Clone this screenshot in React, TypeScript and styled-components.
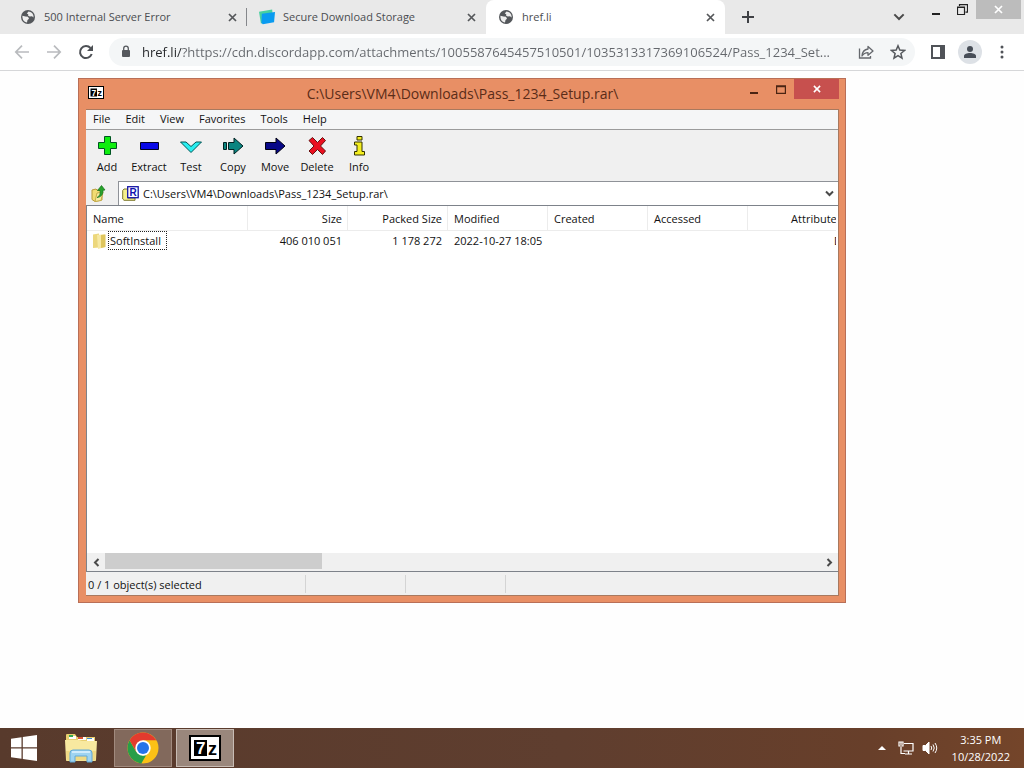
import React from "react";
import styled, { createGlobalStyle } from "styled-components";

const GlobalStyle = createGlobalStyle`
  * { box-sizing: border-box; }
  html, body, #root { height: 100%; }
  body {
    margin: 0;
    font-family: "Open Sans", "Noto Sans", sans-serif;
    font-size: 11px;
    line-height: 16px;
    color: #111;
    background: #fff;
    overflow: hidden;
  }
  button, input, select { font: inherit; color: inherit; }
  button { border: 0; padding: 0; margin: 0; background: none; }
  svg { display: block; flex: none; }
`;

const Screen = styled.div`
  display: flex;
  flex-direction: column;
  min-height: 100vh;
`;

/* ---------- Browser ---------- */

const TabStrip = styled.header`
  display: flex;
  align-items: flex-start;
  height: 34px;
  padding-left: 8px;
  background: #e9e9e9;
`;

const Tab = styled.div<{ $active?: boolean; $divider?: boolean }>`
  position: relative;
  flex: 0 1 239px;
  min-width: 0;
  display: flex;
  align-items: center;
  gap: 8px;
  height: 34px;
  padding: 0 7px 0 12px;
  border-radius: 8px 8px 0 0;
  background: ${(p) => (p.$active ? "#fff" : "transparent")};
  color: #4b4d51;

  &::after {
    content: "";
    display: ${(p) => (p.$divider ? "block" : "none")};
    position: absolute;
    right: 0;
    top: 8px;
    width: 1px;
    height: 18px;
    background: #85878b;
  }
`;

const TabTitle = styled.span`
  flex: 1;
  overflow: hidden;
  white-space: nowrap;
`;

const IconButton = styled.button<{ $size: number; $round?: boolean }>`
  display: flex;
  align-items: center;
  justify-content: center;
  flex: none;
  width: ${(p) => p.$size}px;
  height: ${(p) => p.$size}px;
  border-radius: ${(p) => (p.$round ? "50%" : "0")};
  background: ${(p) => (p.$round ? "#dde1e6" : "transparent")};
`;

const NewTab = styled(IconButton)`
  margin: 5px 0 0 11px;
`;

const TabSearch = styled(IconButton)`
  margin: 5px 11px 0 auto;
`;

const FrameButton = styled.button<{ $close?: boolean }>`
  display: flex;
  align-items: center;
  justify-content: center;
  width: ${(p) => (p.$close ? 45 : 27)}px;
  height: 19px;
  margin-right: ${(p) => (p.$close ? 3 : 0)}px;
  background: ${(p) => (p.$close ? "#bcbcbc" : "transparent")};
`;

const NavBar = styled.nav`
  display: flex;
  align-items: center;
  gap: 8px;
  height: 37px;
  padding: 0 10px;
  background: #fff;
  border-bottom: 1px solid #d6d7d9;
`;

const AddressPill = styled.div`
  flex: 1;
  min-width: 0;
  display: flex;
  align-items: center;
  gap: 12px;
  height: 28px;
  margin: 0 3px;
  padding: 0 7px 0 9px;
  border-radius: 14px;
  background: #f4f6f7;
`;

const AddressLabel = styled.label`
  flex: 1;
  min-width: 0;
  display: flex;
  align-items: center;
  gap: 8px;
`;

const AddressInput = styled.input`
  flex: 1;
  min-width: 0;
  height: 20px;
  padding: 0;
  border: 0;
  outline: 0;
  font-size: 13px;
  color: transparent;
  background: linear-gradient(to right, #25272a 40px, #64676c 40px);
  background-clip: text;
  -webkit-background-clip: text;
`;

const Page = styled.main`
  position: relative;
  flex: 1;
  min-height: 400px;
  background: #fefefe;
`;

/* ---------- Archive window ---------- */

const Window = styled.section`
  position: absolute;
  left: 78px;
  top: 7px;
  bottom: 125px;
  width: 75%;
  display: flex;
  flex-direction: column;
  padding: 0 6px 6px 7px;
  border: 1px solid #b96f57;
  background: #e88f65;
`;

const TitleBar = styled.div`
  display: grid;
  grid-template-columns: 1fr auto 1fr;
  align-items: start;
  height: 30px;
`;

const TitleIcon = styled.div`
  padding: 7px 0 0 2px;
`;

const WindowTitle = styled.h1`
  margin: 0;
  padding-top: 4px;
  font-size: 14px;
  line-height: 22px;
  font-weight: 400;
  color: #5a2c18;
  white-space: nowrap;
`;

const TitleControls = styled.div`
  display: flex;
  justify-content: flex-end;
`;

const TitleButton = styled.button<{ $close?: boolean }>`
  display: flex;
  align-items: center;
  justify-content: center;
  width: ${(p) => (p.$close ? 45 : 27)}px;
  height: 20px;
  background: ${(p) => (p.$close ? "#c7504e" : "transparent")};
`;

const Client = styled.div`
  flex: 1;
  min-height: 0;
  display: flex;
  flex-direction: column;
  border: 1px solid #a8795f;
  border-width: 1px 1px 1px 0;
  background: #f0f0f0;
`;

const MenuBar = styled.div`
  display: flex;
  align-items: flex-start;
  gap: 1px;
  height: 20px;
  border-bottom: 1px solid #9b9b9b;
  background: #f5f6f7;
`;

const MenuItem = styled.button`
  padding: 0 7px;
  line-height: 18px;
`;

const ToolBar = styled.div`
  display: flex;
  height: 51px;
`;

const ToolButton = styled.button`
  display: flex;
  flex-direction: column;
  align-items: center;
  gap: 2px;
  width: 42px;
  padding-top: 5px;
  line-height: 16px;
`;

const PathBar = styled.div`
  display: flex;
  height: 24px;
`;

const UpButton = styled.button`
  display: flex;
  align-items: center;
  justify-content: center;
  width: 26px;
`;

const PathBox = styled.label`
  flex: 1;
  display: flex;
  align-items: center;
  gap: 4px;
  margin-left: 6px;
  padding: 0 4px 0 3px;
  border: 1px solid #8f9298;
  border-width: 1px 0 0 1px;
  background: #fff;
`;

const PathSelect = styled.select`
  flex: 1;
  appearance: none;
  height: 20px;
  padding: 0;
  border: 0;
  background: transparent;
`;

const FileList = styled.div`
  flex: 1;
  min-height: 0;
  display: flex;
  flex-direction: column;
  border: 1px solid #7d828a;
  border-right: 0;
  background: #fff;
`;

const TableClip = styled.div`
  flex: 1;
  min-height: 0;
  margin-right: 2px;
  overflow: hidden;
`;

const Table = styled.table`
  width: 761px;
  table-layout: fixed;
  border-collapse: separate;
  border-spacing: 0;
`;

const Col = styled.col<{ $w: number }>`
  width: ${(p) => p.$w}px;
`;

const HeadCell = styled.th<{ $right?: boolean }>`
  height: 25px;
  padding: 2px 5px 0 6px;
  border: 1px solid #ececec;
  border-width: 0 1px 1px 0;
  font-weight: 400;
  text-align: ${(p) => (p.$right ? "right" : "left")};
  white-space: nowrap;
`;

const Cell = styled.td<{ $right?: boolean }>`
  height: 19px;
  padding: 0 6px;
  text-align: ${(p) => (p.$right ? "right" : "left")};
  white-space: nowrap;
`;

const FileName = styled.div`
  display: flex;
  align-items: center;
  gap: 2px;
`;

const FocusedName = styled.span`
  padding: 0 5px 0 1px;
  border: 1px dotted #222;
  line-height: 17px;
`;

const ScrollBar = styled.div`
  display: flex;
  height: 18px;
  background: #f0f0f0;
`;

const ScrollTrack = styled.div`
  flex: 1;
  display: flex;
  padding-bottom: 2px;
`;

const ScrollThumb = styled.div`
  flex: 0 1 217px;
  background: #cdcdcd;
`;

const ScrollButton = styled.button`
  display: flex;
  align-items: center;
  justify-content: center;
  width: 18px;
`;

const StatusBar = styled.footer`
  display: flex;
  align-items: center;
  height: 23px;
`;

const StatusPane = styled.div<{ $w: number }>`
  width: ${(p) => p.$w}px;
  height: 18px;
  padding: 1px 0 0 2px;
  line-height: 18px;
  border-right: 1px solid #d4d4d4;
`;

/* ---------- Taskbar ---------- */

const TaskBar = styled.footer`
  display: flex;
  align-items: center;
  height: 40px;
  color: #fff;
  background: linear-gradient(to right, #583a2c, #5f3e2f 55%, #683f2a 85%, #74452a);
`;

const StartButton = styled.button`
  display: flex;
  align-items: center;
  justify-content: center;
  width: 48px;
  height: 40px;
  margin-right: 4px;
`;

const TaskButton = styled.button<{ $state?: "open" | "active" }>`
  display: flex;
  align-items: center;
  justify-content: center;
  width: 58px;
  height: 38px;
  margin-right: 4px;
  border: 1px solid
    ${(p) => (p.$state === "active" ? "#c8bcb4" : p.$state === "open" ? "#a18a7e" : "transparent")};
  background: ${(p) => (p.$state === "active" ? "#9a877c" : p.$state === "open" ? "#82695c" : "transparent")};
`;

const Tray = styled.div`
  display: flex;
  align-items: center;
  gap: 8px;
  margin-left: auto;
  padding-right: 14px;
`;

const Clock = styled.time`
  padding-left: 6px;
  line-height: 17px;
  text-align: center;
`;

/* ---------- Icons ---------- */

const Globe = () => (
  <svg width="16" height="16" viewBox="0 0 16 16">
    <circle cx="8" cy="8" r="7" fill="#54575b" />
    <path d="M2.400 6.800 5.500 7.600l2.500.2 1 2-1.500 1.200-.5 2.500C4 13.200 2.200 10.500 2.400 6.800Z" fill="#eee" />
    <path d="M8.500 2.400q2 .1 3.600 1.500 1.800 2 1.500 4.600l-1.600-1.300-2.300.3L8 6.500l.3-1.300L6.800 4.500Z" fill="#eee" />
  </svg>
);

const BlueBoxes = () => (
  <svg width="16" height="16" viewBox="0 0 17 16">
    <path d="M0 2.500 14 0l1 12L2 15Z" fill="#47d0a0" />
    <path d="M3 4.500 17 2.600 16 13.500 4 15.800 2.600 14Z" fill="#0a9bf0" />
  </svg>
);

const Cross = ({ size = 9, color = "#55575a", w = 1.7 }: { size?: number; color?: string; w?: number }) => (
  <svg width={size} height={size} viewBox="0 0 9 9" stroke={color} strokeWidth={w}>
    <path d="M1 1 8 8M8 1 1 8" />
  </svg>
);

const Arrow = ({ back }: { back?: boolean }) => (
  <svg width="16" height="16" viewBox="0 0 16 16" fill="none" stroke="#b9bbbe" strokeWidth="1.700">
    <path d={back ? "M15 8H2M8 1.700 1.800 8 8 14.300" : "M1 8h13M8 1.700 14.200 8 8 14.300"} />
  </svg>
);

const Reload = () => (
  <svg width="16" height="16" viewBox="0 0 16 16" fill="none" stroke="#4d5055" strokeWidth="2">
    <path d="M13.700 10A6 6 0 1 1 12.500 4" />
    <path d="M15 1v6H9Z" fill="#4d5055" stroke="none" />
  </svg>
);

const Lock = () => (
  <svg width="16" height="16" viewBox="0 0 16 16">
    <rect x="4" y="6" width="8" height="7" rx="1" fill="#55585d" />
    <path d="M5.700 7V4.500a2.300 2.300 0 0 1 4.600 0V7" fill="none" stroke="#55585d" strokeWidth="1.300" />
  </svg>
);

const Share = () => (
  <svg width="16" height="16" viewBox="0 0 16 16" fill="none" stroke="#65686d" strokeWidth="1.300">
    <path d="M1.500 4.500V14h11v-2" />
    <path d="M10 2.500 15 7l-5 4.300V8.700C7.200 8.700 5.500 9.700 4 12c.3-4 2.300-6.500 6-7Z" strokeLinejoin="round" />
  </svg>
);

const Star = () => (
  <svg width="16" height="16" viewBox="0 0 16 16" fill="none" stroke="#55585d" strokeWidth="1.500">
    <path d="m8 1.800 1.800 4.300 4.700.4-3.600 3 1.100 4.600L8 11.700l-4 2.400 1.100-4.600-3.600-3 4.700-.4Z" />
  </svg>
);

const SidePanel = () => (
  <svg width="14" height="14" viewBox="0 0 14 14">
    <path d="M1 1h12v12H1Z" fill="none" stroke="#505358" strokeWidth="2" />
    <path d="M9 0h5v14H9Z" fill="#505358" />
  </svg>
);

const Person = () => (
  <svg width="14" height="14" viewBox="0 0 14 14" fill="#474d57">
    <circle cx="7" cy="4" r="3" />
    <path d="M1 13v-2c0-2 3-3 6-3s6 1 6 3v2Z" />
  </svg>
);

const Dots = () => (
  <svg width="4" height="14" viewBox="0 0 4 14" fill="#505358">
    <circle cx="2" cy="2" r="1.500" />
    <circle cx="2" cy="7" r="1.500" />
    <circle cx="2" cy="12" r="1.500" />
  </svg>
);

const chevronPaths = {
  down: "M1 2.500 4.500 6 8 2.500",
  left: "M6.500 1 3 4.500 6.500 8",
  right: "M2.500 1 6 4.500 2.500 8",
};

const Chevron = ({ dir, size = 9, w = 2 }: { dir: keyof typeof chevronPaths; size?: number; w?: number }) => (
  <svg width={size} height={size} viewBox="0 0 9 9" fill="none" stroke="#4a4a4a" strokeWidth={w}>
    <path d={chevronPaths[dir]} />
  </svg>
);

const Minimize = ({ color }: { color: string }) => (
  <svg width="10" height="12" viewBox="0 0 10 12">
    <path d="M1 9h8v2H1Z" fill={color} />
  </svg>
);

const Maximize = () => (
  <svg width="10" height="9" viewBox="0 0 10 9">
    <path d="M.5 1.500h9v7h-9ZM0 1h10" fill="none" stroke="#4a2413" strokeWidth="1.400" />
  </svg>
);

const Restore = () => (
  <svg width="11" height="11" viewBox="0 0 11 11" fill="none" stroke="#222">
    <path d="M.5 3h7v7.500h-7ZM.5 3.500h7M2.500 2V.7h8v7.500H8.500" strokeWidth="1.200" />
  </svg>
);

const SevenZip = ({ size }: { size: number }) => (
  <svg width={size} height={(size * 13) / 16} viewBox="0 0 32 26">
    <rect x="1" y="1" width="30" height="24" fill="#fff" stroke="#000" strokeWidth="2" />
    <rect x="5" y="5" width="13" height="16" fill="#000" />
    <text x="7" y="19" fontFamily="Liberation Sans" fontWeight="700" fontSize="17" fill="#fff">7</text>
    <text x="19" y="20" fontFamily="Liberation Sans" fontWeight="700" fontSize="18" fill="#000">z</text>
  </svg>
);

const toolShapes: Record<string, React.ReactNode> = {
  Add: <path d="M8.500 1.500h6v6h6v6h-6v6h-6v-6h-6v-6h6Z" fill="#10ee10" stroke="#052" />,
  Extract: <path d="M2.500 7.500h18v7h-18Z" fill="#0808e8" stroke="#002" />,
  Test: <path d="M.500 7H6l5 4.500L16 7h5.500L11 17.500Z" fill="#28eef0" stroke="#055" />,
  Copy: <path d="M1.500 7.500h3v7h-3ZM6.500 7.500H12V3l9 8-9 8v-4.500H6.500Z" fill="#0b8580" stroke="#022" />,
  Move: <path d="M1.500 7.500H12V3l9 8-9 8v-4.500H1.500Z" fill="#080888" stroke="#001" />,
  Delete: <path d="m3 5.500 3.500-3 5 5 5-5 3 3L14.500 11l5 5-3 3.500-5-5-5 5L3 16l5-5Z" fill="#ea1020" stroke="#611" />,
  Info: <path d="M9 1.500h5v3.500H9ZM6.500 7H14v9.500h2.500V20h-10v-3.500H9V10H6.500Z" fill="#f4ee20" stroke="#330" />,
};

const UpFolder = () => (
  <svg width="16" height="17" viewBox="0 0 16 17">
    <path d="M1 5 5 4l1 1 5 1v9l-7 1.500-3-2Z" fill="#f1dc73" stroke="#b99b37" />
    <path d="M4 16.500 6 8l6-1-2 8.500Z" fill="#f7eba0" stroke="#c5ac4a" />
    <path d="M6 12.500c3-1.500 3.500-4 3-7H6.500l4-5L14 5l-2 .3c.3 4-2 7-6 7.200Z" fill="#27a32c" stroke="#17711c" strokeWidth=".7" />
  </svg>
);

const ArchiveFolder = () => (
  <svg width="17" height="15" viewBox="0 0 17 15">
    <path d="M.7 4.500 2 3h4v9h7v2.300H2L.7 13Z" fill="#f5f08c" stroke="#7c782c" />
    <rect x="5.700" y=".7" width="10.500" height="11" fill="#fff" stroke="#1515a5" strokeWidth="1.300" />
    <text x="7.500" y="9.500" fontFamily="Liberation Sans" fontWeight="700" fontSize="10" fill="#1111b0">R</text>
  </svg>
);

const Folder = () => (
  <svg width="13" height="16" viewBox="0 0 13 16">
    <path d="M0 1.500 6 .5v14L0 15Z" fill="#ecd77c" />
    <path d="m4 2 8-.8V14l-7 2Z" fill="#f6e8a2" />
    <path d="m8 2 4.500-.6V14L8 15Z" fill="#dfc65e" />
  </svg>
);

const WindowsLogo = () => (
  <svg width="26" height="26" viewBox="0 0 26 26" fill="#fff">
    <path d="M0 3.700 10.500 2.200V12.300H0ZM11.800 2 26 0v12.300H11.800ZM0 13.500h10.500v10.200L0 22.200ZM11.800 13.500H26V26l-14.200-2Z" />
  </svg>
);

const Explorer = () => (
  <svg width="34" height="30" viewBox="0 0 34 30">
    <path d="M2 2q0-1 1-1h8l2 3h18v6H2Z" fill="#e9cf70" />
    <path d="M5 3h7v3H5ZM14 4h8v3h-8ZM23 5h7v3h-7Z" fill="#fff" />
    <path d="M5 2h4v2H5Z" fill="#36a852" />
    <path d="M14 4h5v2h-5Z" fill="#d95534" />
    <path d="M23 5h5v1h-5Z" fill="#3f8fce" />
    <path d="M1 7h14l3 1h15l-1 19q0 1-1 1H3q-1 0-1-1Z" fill="#f8e9a0" />
    <path d="M2 18h30l-.5 9.500H2.500Z" fill="#f0da84" />
    <path d="M6 29V20q0-3 3-3h16q3 0 3 3v9h-5v-6H11v6Z" fill="#9fd4f1" stroke="#62a9d6" />
    <path d="M8 19h18" stroke="#e2f5ff" strokeWidth="1.500" />
  </svg>
);

const ChromeLogo = () => (
  <svg width="32" height="32" viewBox="0 0 32 32">
    <circle cx="16" cy="16" r="15.500" fill="#fbc116" />
    <path d="M2.600 8.200 9.300 19.900 16 23.700l3.300-.7-5 8.400A15.500 15.500 0 0 1 2.600 8.200Z" fill="#289e48" />
    <path d="M2.600 8.200A15.500 15.500 0 0 1 29.400 8.300H16L9.300 19.800Z" fill="#e33b2e" />
    <circle cx="16" cy="16" r="7.700" fill="#fff" />
    <circle cx="16" cy="16" r="6" fill="#2773e8" />
  </svg>
);

const TrayArrow = () => (
  <svg width="16" height="4" viewBox="0 0 16 4" fill="#fff">
    <path d="M8 0 12 4H4Z" />
  </svg>
);

const Network = () => (
  <svg width="16" height="14" viewBox="0 0 16 14" fill="none" stroke="#fff" strokeWidth="1.200">
    <path d="M6 2.500h9v7.500H5.500M7 13h7M10.500 10v3M3 6v6.500h4" />
    <path d="M1 1h4v4H1ZM3 1v3" />
  </svg>
);

const Speaker = () => (
  <svg width="16" height="14" viewBox="0 0 16 14" fill="none" stroke="#fff">
    <path d="M1 4.500h2.500L7 1v12L3.500 9.500H1Z" fill="#fff" />
    <path d="M9 5q1.500 2 0 4M11 3.500q2.500 3.500 0 7M13 2q3.500 5 0 10" />
  </svg>
);

/* ---------- Data ---------- */

const tabs = [
  { title: "500 Internal Server Error", icon: <Globe />, divider: true },
  { title: "Secure Download Storage", icon: <BlueBoxes /> },
  { title: "href.li", icon: <Globe />, active: true },
];

const menus = ["File", "Edit", "View", "Favorites", "Tools", "Help"];

const columns = [
  { label: "Name", width: 161 },
  { label: "Size", width: 100, right: true },
  { label: "Packed Size", width: 100, right: true },
  { label: "Modified", width: 100 },
  { label: "Created", width: 100 },
  { label: "Accessed", width: 100 },
  { label: "Attributes", width: 100, right: true },
];

const archivePath = "C:\\Users\\VM4\\Downloads\\Pass_1234_Setup.rar\\";
const pageUrl =
  "href.li/?https://cdn.discordapp.com/attachments/1005587645457510501/1035313317369106524/Pass_1234_Set...";

export default function App() {
  return (
    <Screen>
      <GlobalStyle />
      <TabStrip>
        {tabs.map((t) => (
          <Tab key={t.title} $active={t.active} $divider={t.divider}>
            {t.icon}
            <TabTitle>{t.title}</TabTitle>
            <IconButton $size={16} aria-label="Close tab"><Cross /></IconButton>
          </Tab>
        ))}
        <NewTab $size={24} aria-label="New tab">
          <svg width="12" height="12" viewBox="0 0 12 12" stroke="#3f4145" strokeWidth="2">
            <path d="M6 0v12M0 6h12" />
          </svg>
        </NewTab>
        <TabSearch $size={24} aria-label="Search tabs"><Chevron dir="down" size={12} w={1.5} /></TabSearch>
        <FrameButton aria-label="Minimize"><Minimize color="#222" /></FrameButton>
        <FrameButton aria-label="Restore"><Restore /></FrameButton>
        <FrameButton $close aria-label="Close"><Cross color="#fff" /></FrameButton>
      </TabStrip>

      <NavBar>
        <IconButton $size={24} aria-label="Back"><Arrow back /></IconButton>
        <IconButton $size={24} aria-label="Forward"><Arrow /></IconButton>
        <IconButton $size={24} aria-label="Reload"><Reload /></IconButton>
        <AddressPill>
          <AddressLabel>
            <Lock />
            <AddressInput aria-label="Address" defaultValue={pageUrl} />
          </AddressLabel>
          <IconButton $size={20} aria-label="Share"><Share /></IconButton>
          <IconButton $size={20} aria-label="Bookmark"><Star /></IconButton>
        </AddressPill>
        <IconButton $size={24} aria-label="Side panel"><SidePanel /></IconButton>
        <IconButton $size={24} $round aria-label="Profile"><Person /></IconButton>
        <IconButton $size={24} aria-label="Menu"><Dots /></IconButton>
      </NavBar>

      <Page>
        <Window>
          <TitleBar>
            <TitleIcon><SevenZip size={16} /></TitleIcon>
            <WindowTitle>{archivePath}</WindowTitle>
            <TitleControls>
              <TitleButton aria-label="Minimize"><Minimize color="#4a2413" /></TitleButton>
              <TitleButton aria-label="Maximize"><Maximize /></TitleButton>
              <TitleButton $close aria-label="Close"><Cross color="#fff" size={8} /></TitleButton>
            </TitleControls>
          </TitleBar>
          <Client>
            <MenuBar>
              {menus.map((m) => <MenuItem key={m}>{m}</MenuItem>)}
            </MenuBar>
            <ToolBar>
              {Object.keys(toolShapes).map((name) => (
                <ToolButton key={name}>
                  <svg width="22" height="22" viewBox="0 0 22 22">{toolShapes[name]}</svg>
                  {name}
                </ToolButton>
              ))}
            </ToolBar>
            <PathBar>
              <UpButton aria-label="Up one level"><UpFolder /></UpButton>
              <PathBox>
                <ArchiveFolder />
                <PathSelect aria-label="Folder path">
                  <option>{archivePath}</option>
                </PathSelect>
                <Chevron dir="down" />
              </PathBox>
            </PathBar>
            <FileList>
              <TableClip>
                <Table>
                  <colgroup>
                    {columns.map((c) => <Col key={c.label} $w={c.width} />)}
                  </colgroup>
                  <thead>
                    <tr>
                      {columns.map((c) => <HeadCell key={c.label} $right={c.right}>{c.label}</HeadCell>)}
                    </tr>
                  </thead>
                  <tbody>
                    <tr>
                      <Cell>
                        <FileName><Folder /><FocusedName>SoftInstall</FocusedName></FileName>
                      </Cell>
                      <Cell $right>406 010 051</Cell>
                      <Cell $right>1 178 272</Cell>
                      <Cell>2022-10-27 18:05</Cell>
                      <Cell />
                      <Cell />
                      <Cell $right>D</Cell>
                    </tr>
                  </tbody>
                </Table>
              </TableClip>
              <ScrollBar>
                <ScrollButton aria-label="Scroll left"><Chevron dir="left" /></ScrollButton>
                <ScrollTrack><ScrollThumb /></ScrollTrack>
                <ScrollButton aria-label="Scroll right"><Chevron dir="right" /></ScrollButton>
              </ScrollBar>
            </FileList>
            <StatusBar>
              <StatusPane $w={220}>0 / 1 object(s) selected</StatusPane>
              <StatusPane $w={100} />
              <StatusPane $w={100} />
            </StatusBar>
          </Client>
        </Window>
      </Page>

      <TaskBar>
        <StartButton aria-label="Start"><WindowsLogo /></StartButton>
        <TaskButton aria-label="File Explorer"><Explorer /></TaskButton>
        <TaskButton $state="open" aria-label="Chrome"><ChromeLogo /></TaskButton>
        <TaskButton $state="active" aria-label="7-Zip"><SevenZip size={32} /></TaskButton>
        <Tray>
          <TrayArrow />
          <Network />
          <Speaker />
          <Clock>
            3:35 PM
            <br />
            10/28/2022
          </Clock>
        </Tray>
      </TaskBar>
    </Screen>
  );
}
